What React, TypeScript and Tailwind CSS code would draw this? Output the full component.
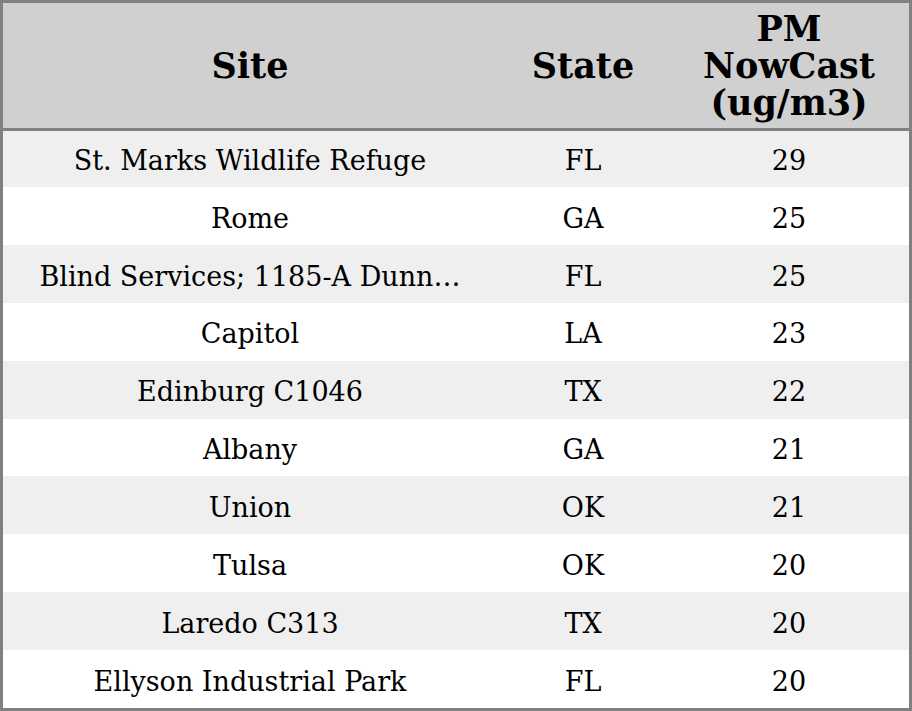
const rows: [string, string, number][] = [
  ["St. Marks Wildlife Refuge", "FL", 29],
  ["Rome", "GA", 25],
  ["Blind Services; 1185-A Dunn…", "FL", 25],
  ["Capitol", "LA", 23],
  ["Edinburg C1046", "TX", 22],
  ["Albany", "GA", 21],
  ["Union", "OK", 21],
  ["Tulsa", "OK", 20],
  ["Laredo C313", "TX", 20],
  ["Ellyson Industrial Park", "FL", 20],
];

export default function App() {
  return (
    <div className="w-[912px] h-[711px] border-[3px] border-[#808080] bg-white text-black font-['DejaVu_Serif',serif] flex flex-col">
      {/* header */}
      <div className="h-[125px] shrink-0 bg-[#d0d0d0] grid grid-cols-[494px_172px_240px] items-center text-center text-[35px] font-bold leading-[37px]">
        <div>Site</div>
        <div>State</div>
        <div>
          PM
          <br />
          NowCast
          <br />
          (ug/m3)
        </div>
      </div>
      <div className="h-[3px] shrink-0 bg-[#808080]" />
      {rows.map(([site, state, value], i) => (
        <div
          key={i}
          className={`shrink-0 grid grid-cols-[494px_172px_240px] items-center text-center text-[27px] ${
            i === 0 ? "h-[56px] pt-[4px]" : "h-[57.9px] pt-[6px]"
          } ${i % 2 === 0 ? "bg-[#efefef]" : "bg-white"}`}
        >
          <div className="whitespace-nowrap">{site}</div>
          <div>{state}</div>
          <div>{value}</div>
        </div>
      ))}
    </div>
  );
}
